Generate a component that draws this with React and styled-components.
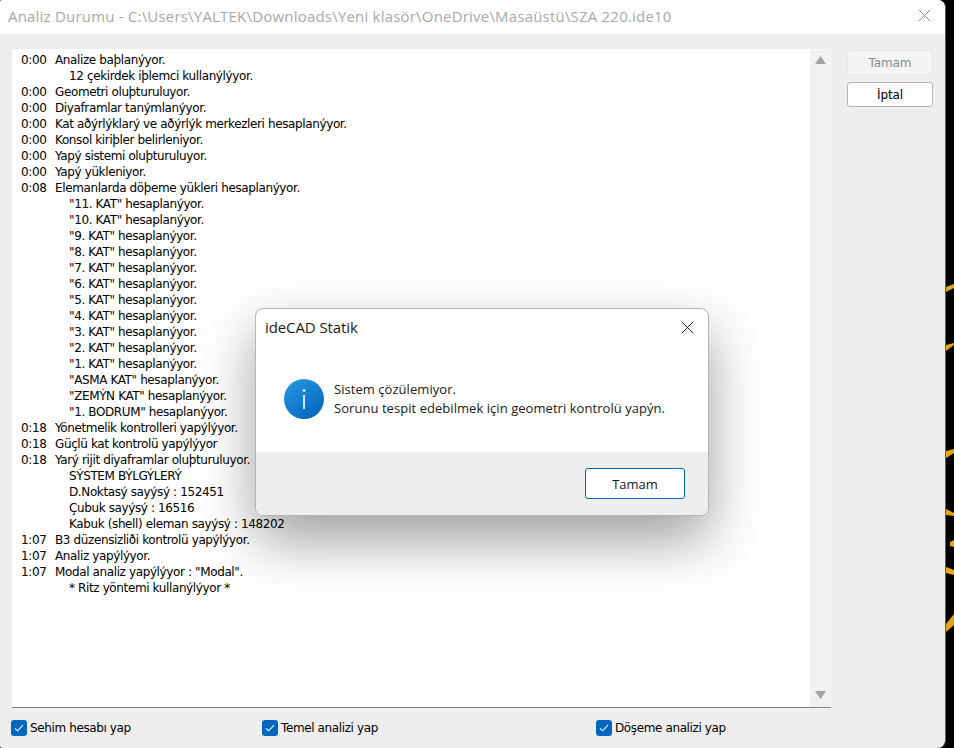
import React from "react";
import styled, { createGlobalStyle } from "styled-components";

const Global = createGlobalStyle`
  html, body { margin: 0; padding: 0; background: #000; }
  * { box-sizing: border-box; }
`;

const LOG = [
  ["0:00", "Analize baþlanýyor."],
  ["", "12 çekirdek iþlemci kullanýlýyor."],
  ["0:00", "Geometri oluþturuluyor."],
  ["0:00", "Diyaframlar tanýmlanýyor."],
  ["0:00", "Kat aðýrlýklarý ve aðýrlýk merkezleri hesaplanýyor."],
  ["0:00", "Konsol kiriþler belirleniyor."],
  ["0:00", "Yapý sistemi oluþturuluyor."],
  ["0:00", "Yapý yükleniyor."],
  ["0:08", "Elemanlarda döþeme yükleri hesaplanýyor."],
  ["", "\"11. KAT\" hesaplanýyor."],
  ["", "\"10. KAT\" hesaplanýyor."],
  ["", "\"9. KAT\" hesaplanýyor."],
  ["", "\"8. KAT\" hesaplanýyor."],
  ["", "\"7. KAT\" hesaplanýyor."],
  ["", "\"6. KAT\" hesaplanýyor."],
  ["", "\"5. KAT\" hesaplanýyor."],
  ["", "\"4. KAT\" hesaplanýyor."],
  ["", "\"3. KAT\" hesaplanýyor."],
  ["", "\"2. KAT\" hesaplanýyor."],
  ["", "\"1. KAT\" hesaplanýyor."],
  ["", "\"ASMA KAT\" hesaplanýyor."],
  ["", "\"ZEMÝN KAT\" hesaplanýyor."],
  ["", "\"1. BODRUM\" hesaplanýyor."],
  ["0:18", "Yönetmelik kontrolleri yapýlýyor."],
  ["0:18", "Güçlü kat kontrolü yapýlýyor"],
  ["0:18", "Yarý rijit diyaframlar oluþturuluyor."],
  ["", "SÝSTEM BÝLGÝLERÝ"],
  ["", "D.Noktasý sayýsý : 152451"],
  ["", "Çubuk sayýsý : 16516"],
  ["", "Kabuk (shell) eleman sayýsý : 148202"],
  ["1:07", "B3 düzensizliði kontrolü yapýlýyor."],
  ["1:07", "Analiz yapýlýyor."],
  ["1:07", "Modal analiz yapýlýyor : \"Modal\"."],
  ["", "* Ritz yöntemi kullanýlýyor *"],
];

const Page = styled.div`
  position: relative;
  display: flex;
  width: 954px;
  height: 748px;
  overflow: hidden;
  background: #000;
`;
const Win = styled.div`
  display: flex;
  flex-direction: column;
  width: 946px;
  height: 748px;
  background: #eeeeee;
  border-radius: 2px 8px 8px 2px;
  border-right: 1px solid #5c5c5c;
  overflow: hidden;
`;
const TitleBar = styled.div`
  display: flex;
  align-items: center;
  justify-content: space-between;
  height: 34px;
  flex: none;
  padding: 0 14px 3px 8px;
  background: #fff;
`;
const TitleText = styled.div`
  font: 15px "Open Sans", "Noto Sans", sans-serif;
  letter-spacing: 0.2px;
  color: #a8a8a8;
  white-space: nowrap;
`;
const Body = styled.div`
  display: flex;
  flex: 1;
  min-height: 0;
  padding: 15px 13px 0 12px;
  gap: 16px;
`;
const Main = styled.div`
  display: flex;
  flex-direction: column;
  width: 819px;
  flex: none;
`;
const LogBox = styled.div`
  display: flex;
  height: 659px;
  flex: none;
  background: #fff;
  border-bottom: 1px solid #828282;
`;
const LogList = styled.div`
  flex: 1;
  padding: 3px 0 0 9px;
`;
const LogRow = styled.div`
  display: flex;
  height: 16px;
  font: 12px/16px "DejaVu Sans", Verdana, sans-serif;
  letter-spacing: -0.38px;
  color: #000;
  white-space: nowrap;
`;
const Time = styled.span`
  width: ${(p) => (p.$indent ? 48 : 34)}px;
  flex: none;
`;
const Scroll = styled.div`
  display: flex;
  flex-direction: column;
  justify-content: space-between;
  align-items: center;
  width: 21px;
  flex: none;
  padding: 6px 0 8px;
  background: #f1f1f1;
  border-top: 1px solid #fafafa;
  border-right: 1px solid #fafafa;
`;
const Arrow = styled.svg`
  display: block;
  width: 11px;
  height: 8px;
  fill: #a3a3a3;
`;
const Checks = styled.div`
  display: grid;
  grid-template-columns: 251px 334px 1fr;
  align-items: center;
  margin-left: -1px;
  padding-top: 12px;
`;
const Check = styled.label`
  display: flex;
  align-items: center;
  gap: 3px;
  font: 12px "DejaVu Sans", Verdana, sans-serif;
  letter-spacing: -0.38px;
  color: #000;
  white-space: nowrap;
`;
const Box = styled.span`
  display: flex;
  align-items: center;
  justify-content: center;
  width: 16px;
  height: 16px;
  flex: none;
  border-radius: 3px;
  background: #0067c0;
`;
const Side = styled.div`
  display: flex;
  flex-direction: column;
  gap: 7px;
  width: 86px;
  flex: none;
  padding-top: 1px;
`;
const SideButton = styled.button`
  height: 25px;
  padding: 0;
  border-radius: 3px;
  font: 12px "DejaVu Sans", Verdana, sans-serif;
  letter-spacing: -0.1px;
  background: ${(p) => (p.disabled ? "#f5f5f5" : "#fdfdfd")};
  border: 1px solid ${(p) => (p.disabled ? "#e8e8e8" : "#b4b4b4")};
  color: ${(p) => (p.disabled ? "#8a8a8a" : "#000")};
`;
const Strip = styled.svg`
  display: block;
  width: 8px;
  height: 748px;
  flex: none;
`;
const Dialog = styled.div`
  position: absolute;
  left: 255px;
  top: 308px;
  display: flex;
  flex-direction: column;
  width: 454px;
  height: 208px;
  overflow: hidden;
  background: #fff;
  border: 1px solid #b5b5b5;
  border-radius: 8px;
  box-shadow: 0 24px 56px rgba(0, 0, 0, 0.38);
`;
const DialogHead = styled.div`
  display: flex;
  align-items: center;
  justify-content: space-between;
  height: 36px;
  flex: none;
  padding: 0 14px 0 9px;
  font: 15px "Open Sans", "Noto Sans", sans-serif;
  letter-spacing: -0.1px;
  color: #1a1a1a;
`;
const DialogBody = styled.div`
  display: flex;
  align-items: flex-start;
  flex: 1;
  gap: 10px;
  padding: 34px 0 0 28px;
`;
const Message = styled.div`
  font: 13px/19px "Open Sans", "Noto Sans", sans-serif;
  letter-spacing: 0.05px;
  color: #1a1a1a;
  padding-top: 1px;
  white-space: nowrap;
`;
const DialogFoot = styled.div`
  display: flex;
  align-items: center;
  justify-content: flex-end;
  height: 63px;
  flex: none;
  padding: 0 23px 0 0;
  background: #eeeeee;
`;
const OkButton = styled.button`
  width: 100px;
  height: 31px;
  padding: 0;
  background: #fdfdfd;
  border: 1px solid #0067c0;
  border-radius: 3px;
  font: 13px "Open Sans", "Noto Sans", sans-serif;
  color: #1a1a1a;
`;
const CloseIcon = ({ size, color }) => (
  <svg width={size} height={size} viewBox="0 0 14 14" fill="none" stroke={color} strokeWidth="1.05">
    <path d="M1 1 13 13M13 1 1 13" />
  </svg>
);
const Tick = () => (
  <svg width="10" height="8" viewBox="0 0 10 8" fill="none" stroke="#fff" strokeWidth="1.1">
    <path d="M1 4.3 3.6 6.8 9 1.2" />
  </svg>
);

export default function App() {
  return (
    <Page>
      <Global />
      <Win>
        <TitleBar>
          <TitleText>Analiz Durumu - C:\Users\YALTEK\Downloads\Yeni klasör\OneDrive\Masaüstü\SZA 220.ide10</TitleText>
          <CloseIcon size={13} color="#909090" />
        </TitleBar>
        <Body>
          <Main>
            <LogBox>
              <LogList>
                {LOG.map(([t, m], i) => (
                  <LogRow key={i}>
                    <Time $indent={!t}>{t}</Time>
                    <span>{m}</span>
                  </LogRow>
                ))}
              </LogList>
              <Scroll>
                <Arrow viewBox="0 0 11 8"><path d="M5.5 0 11 8H0z" /></Arrow>
                <Arrow viewBox="0 0 11 8"><path d="M0 0h11L5.5 8z" /></Arrow>
              </Scroll>
            </LogBox>
            <Checks>
              <Check><Box><Tick /></Box>Sehim hesabı yap</Check>
              <Check><Box><Tick /></Box>Temel analizi yap</Check>
              <Check><Box><Tick /></Box>Döşeme analizi yap</Check>
            </Checks>
          </Main>
          <Side>
            <SideButton disabled>Tamam</SideButton>
            <SideButton>İptal</SideButton>
          </Side>
        </Body>
      </Win>
      <Strip viewBox="0 0 8 748" fill="#e8a413">
        <path d="M0 287 8 284V288L0 292Z" />
        <path d="M0 345 8 343V345L0 351Z" />
        <path d="M0 451 8 449V453L0 458Z" />
        <path d="M0 509 8 513V516L0 515Z" />
        <path d="M4 542 8 540V547L4 546Z" />
        <path d="M0 567 8 570V575L0 573Z" />
        <path d="M0 624 8 614V625L0 632Z" />
      </Strip>
      <Dialog>
        <DialogHead>
          ideCAD Statik
          <CloseIcon size={13} color="#1a1a1a" />
        </DialogHead>
        <DialogBody>
          <svg width="40" height="40" viewBox="0 0 40 40">
            <defs>
              <linearGradient id="infoFill" x1="0" y1="0" x2="0.7" y2="1">
                <stop offset="0" stopColor="#2a9be0" />
                <stop offset="1" stopColor="#0467c2" />
              </linearGradient>
            </defs>
            <circle cx="20" cy="20" r="20" fill="url(#infoFill)" />
            <circle cx="20" cy="11.5" r="1.3" fill="#fff" />
            <rect x="19.2" y="16" width="1.6" height="14" fill="#fff" />
          </svg>
          <Message>
            Sistem çözülemiyor.
            <br />
            Sorunu tespit edebilmek için geometri kontrolü yapýn.
          </Message>
        </DialogBody>
        <DialogFoot>
          <OkButton>Tamam</OkButton>
        </DialogFoot>
      </Dialog>
    </Page>
  );
}
